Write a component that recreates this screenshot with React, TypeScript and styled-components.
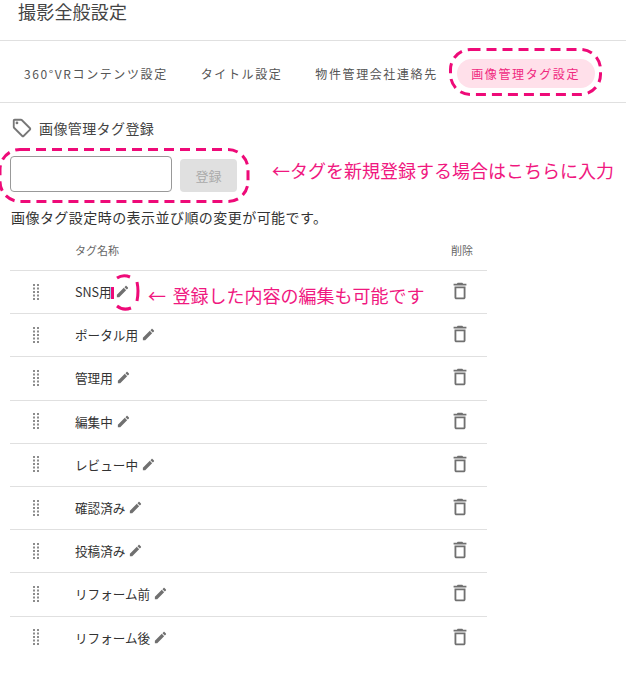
import styled, { createGlobalStyle } from "styled-components";

const GlobalStyle = createGlobalStyle`
  html, body {
    margin: 0;
    padding: 0;
    background: #fff;
  }
  body {
    font-family: "Noto Sans CJK JP", "Noto Sans", sans-serif;
    color: #333;
  }
`;

const Page = styled.div`
  position: relative;
  width: 626px;
  height: 676px;
  overflow: hidden;
`;

const Title = styled.h1`
  margin: 0;
  height: 40px;
  padding: 0 0 0 18px;
  font-size: 18px;
  line-height: 22px;
  font-weight: 400;
  letter-spacing: 0.2px;
  color: #444;
  border-bottom: 1px solid #e0e0e0;
`;

const Tabs = styled.div`
  display: flex;
  align-items: center;
  height: 61px;
  padding-left: 7.5px;
  border-bottom: 1px solid #e0e0e0;
`;

const Tab = styled.div<{ $active?: boolean }>`
  height: 29px;
  line-height: 29px;
  margin-top: 3px;
  font-size: 12px;
  letter-spacing: 1.6px;
  white-space: nowrap;
  border-radius: 15px;
  color: ${(p) => (p.$active ? "#f0287f" : "#555")};
  background: ${(p) => (p.$active ? "#ffe0ea" : "transparent")};
  margin-left: ${(p) => (p.$active ? "3px" : "0")};
  padding: ${(p) => (p.$active ? "0 15px 0 14px" : "0 16.5px")};
`;

const Content = styled.div`
  padding: 14px 0 0 10px;
`;

const SectionHead = styled.div`
  display: flex;
  align-items: center;
  gap: 6px;
  height: 22px;
  margin-left: 1px;
  font-size: 14px;
  letter-spacing: 0.4px;
  color: #444;
`;

const FormRow = styled.div`
  display: flex;
  align-items: flex-end;
  gap: 8px;
  margin-top: 17px;
`;

const TextInput = styled.input`
  box-sizing: border-box;
  width: 162px;
  height: 36px;
  border: 1px solid #999;
  border-radius: 4px;
  background: #fff;
`;

const SubmitButton = styled.button`
  width: 57px;
  height: 33px;
  padding: 0;
  border: 0;
  border-radius: 4px;
  background: #e0e0e0;
  color: #aaa;
  font: inherit;
  font-size: 13px;
`;

const Hint = styled.p`
  margin: 15px 0 0 1px;
  font-size: 14px;
  line-height: 20px;
  letter-spacing: 0.45px;
  color: #333;
`;

const Table = styled.div`
  width: 477px;
  margin-top: 6px;
`;

const HeadRow = styled.div`
  display: grid;
  grid-template-columns: 65px 1fr 36px;
  align-items: center;
  height: 33px;
  padding-bottom: 4px;
  font-size: 11px;
  color: #666;
  border-bottom: 1px solid #e0e0e0;
`;

const Row = styled.div`
  display: grid;
  grid-template-columns: 65px 1fr 38px;
  align-items: center;
  height: 42.2px;
  border-bottom: 1px solid #e0e0e0;
  font-size: 12.6px;
  color: #333;
  &:last-child {
    border-bottom: 0;
  }
`;

const HandleCell = styled.div`
  display: flex;
  padding-left: 22px;
  margin-top: -1px;
`;

const NameCell = styled.div`
  display: flex;
  align-items: center;
  gap: 3px;
  margin-top: -1px;
`;

const TrashCell = styled.div`
  display: flex;
  margin-top: -2px;
`;

const Note = styled.div<{ $x: number; $y: number; $size: number }>`
  position: absolute;
  left: ${(p) => p.$x}px;
  top: ${(p) => p.$y}px;
  font-size: ${(p) => p.$size}px;
  line-height: 24px;
  color: #f0187f;
  white-space: nowrap;
`;

const EditNote = styled(Note)`
  word-spacing: 2.5px;
`;

const Ring = styled.svg<{ $x: number; $y: number }>`
  position: absolute;
  left: ${(p) => p.$x}px;
  top: ${(p) => p.$y}px;
  overflow: visible;
`;

const TagIcon = () => (
  <svg width="22" height="22" viewBox="0 0 24 24" fill="#777">
    <path d="M21.41 11.58l-9-9C12.05 2.22 11.55 2 11 2H4c-1.1 0-2 .9-2 2v7c0 .55.22 1.05.59 1.42l9 9c.36.36.86.58 1.41.58s1.05-.22 1.41-.59l7-7c.37-.36.59-.86.59-1.41s-.23-1.06-.59-1.42zM13 20.01L4 11V4h7v-.01l9 9-7 7.02z" />
    <circle cx="6.5" cy="6.5" r="1.5" />
  </svg>
);

const EditIcon = () => (
  <svg width="15" height="15" viewBox="0 0 24 24" fill="#707070">
    <path d="M3 17.25V21h3.75L17.81 9.94l-3.75-3.75L3 17.25zM20.71 7.04c.39-.39.39-1.02 0-1.41l-2.34-2.34c-.39-.39-1.02-.39-1.41 0l-1.83 1.83 3.75 3.75 1.83-1.83z" />
  </svg>
);

const TrashIcon = () => (
  <svg width="22" height="22" viewBox="0 0 24 24" fill="#707070">
    <path d="M6 19c0 1.1.9 2 2 2h8c1.1 0 2-.9 2-2V7H6v12zM8 9h8v10H8V9zm7.5-5l-1-1h-5l-1 1H5v2h14V4z" />
  </svg>
);

const DragIcon = () => (
  <svg width="8" height="18" viewBox="0 0 8 18" fill="#8c8c8c">
    {[0, 1, 2, 3, 4].map((i) => (
      <g key={i}>
        <rect x="1" y={1 + i * 3.5} width="2" height="2" />
        <rect x="5" y={1 + i * 3.5} width="2" height="2" />
      </g>
    ))}
  </svg>
);

const tags = [
  "SNS用",
  "ポータル用",
  "管理用",
  "編集中",
  "レビュー中",
  "確認済み",
  "投稿済み",
  "リフォーム前",
  "リフォーム後",
];

export default function App() {
  return (
    <Page>
      <GlobalStyle />
      <Title>撮影全般設定</Title>
      <Tabs>
        <Tab>360°VRコンテンツ設定</Tab>
        <Tab>タイトル設定</Tab>
        <Tab>物件管理会社連絡先</Tab>
        <Tab $active>画像管理タグ設定</Tab>
      </Tabs>
      <Content>
        <SectionHead>
          <TagIcon />
          画像管理タグ登録
        </SectionHead>
        <FormRow>
          <TextInput />
          <SubmitButton>登録</SubmitButton>
        </FormRow>
        <Hint>画像タグ設定時の表示並び順の変更が可能です。</Hint>
        <Table>
          <HeadRow>
            <div />
            <div>タグ名称</div>
            <div>削除</div>
          </HeadRow>
          {tags.map((tag) => (
            <Row key={tag}>
              <HandleCell>
                <DragIcon />
              </HandleCell>
              <NameCell>
                {tag}
                <EditIcon />
              </NameCell>
              <TrashCell>
                <TrashIcon />
              </TrashCell>
            </Row>
          ))}
        </Table>
      </Content>

      <Note $x={272} $y={158} $size={18}>
        ←タグを新規登録する場合はこちらに入力
      </Note>
      <EditNote $x={148} $y={283} $size={18}>
        ← 登録した内容の編集も可能です
      </EditNote>

      <Ring $x={449} $y={48} width="153" height="48" fill="none">
        <rect x="1.5" y="1.5" width="150" height="45" rx="20" stroke="#ee0a78" strokeWidth="3" strokeDasharray="10 6" />
      </Ring>
      <Ring $x={0} $y={148} width="250" height="55" fill="none">
        <rect x="0" y="1.5" width="248" height="52" rx="20" stroke="#ee0a78" strokeWidth="3" strokeDasharray="10 6" />
      </Ring>
      <Ring $x={111} $y={274} width="28" height="37" fill="none" stroke="#ee0a78" strokeWidth="3">
        <path d="M6 4 Q12 0 19 3" />
        <path d="M26 8 Q28 17 26 27" />
        <path d="M6 32 Q12 37 20 34" />
        <path d="M1.5 13 V25" />
      </Ring>
    </Page>
  );
}
